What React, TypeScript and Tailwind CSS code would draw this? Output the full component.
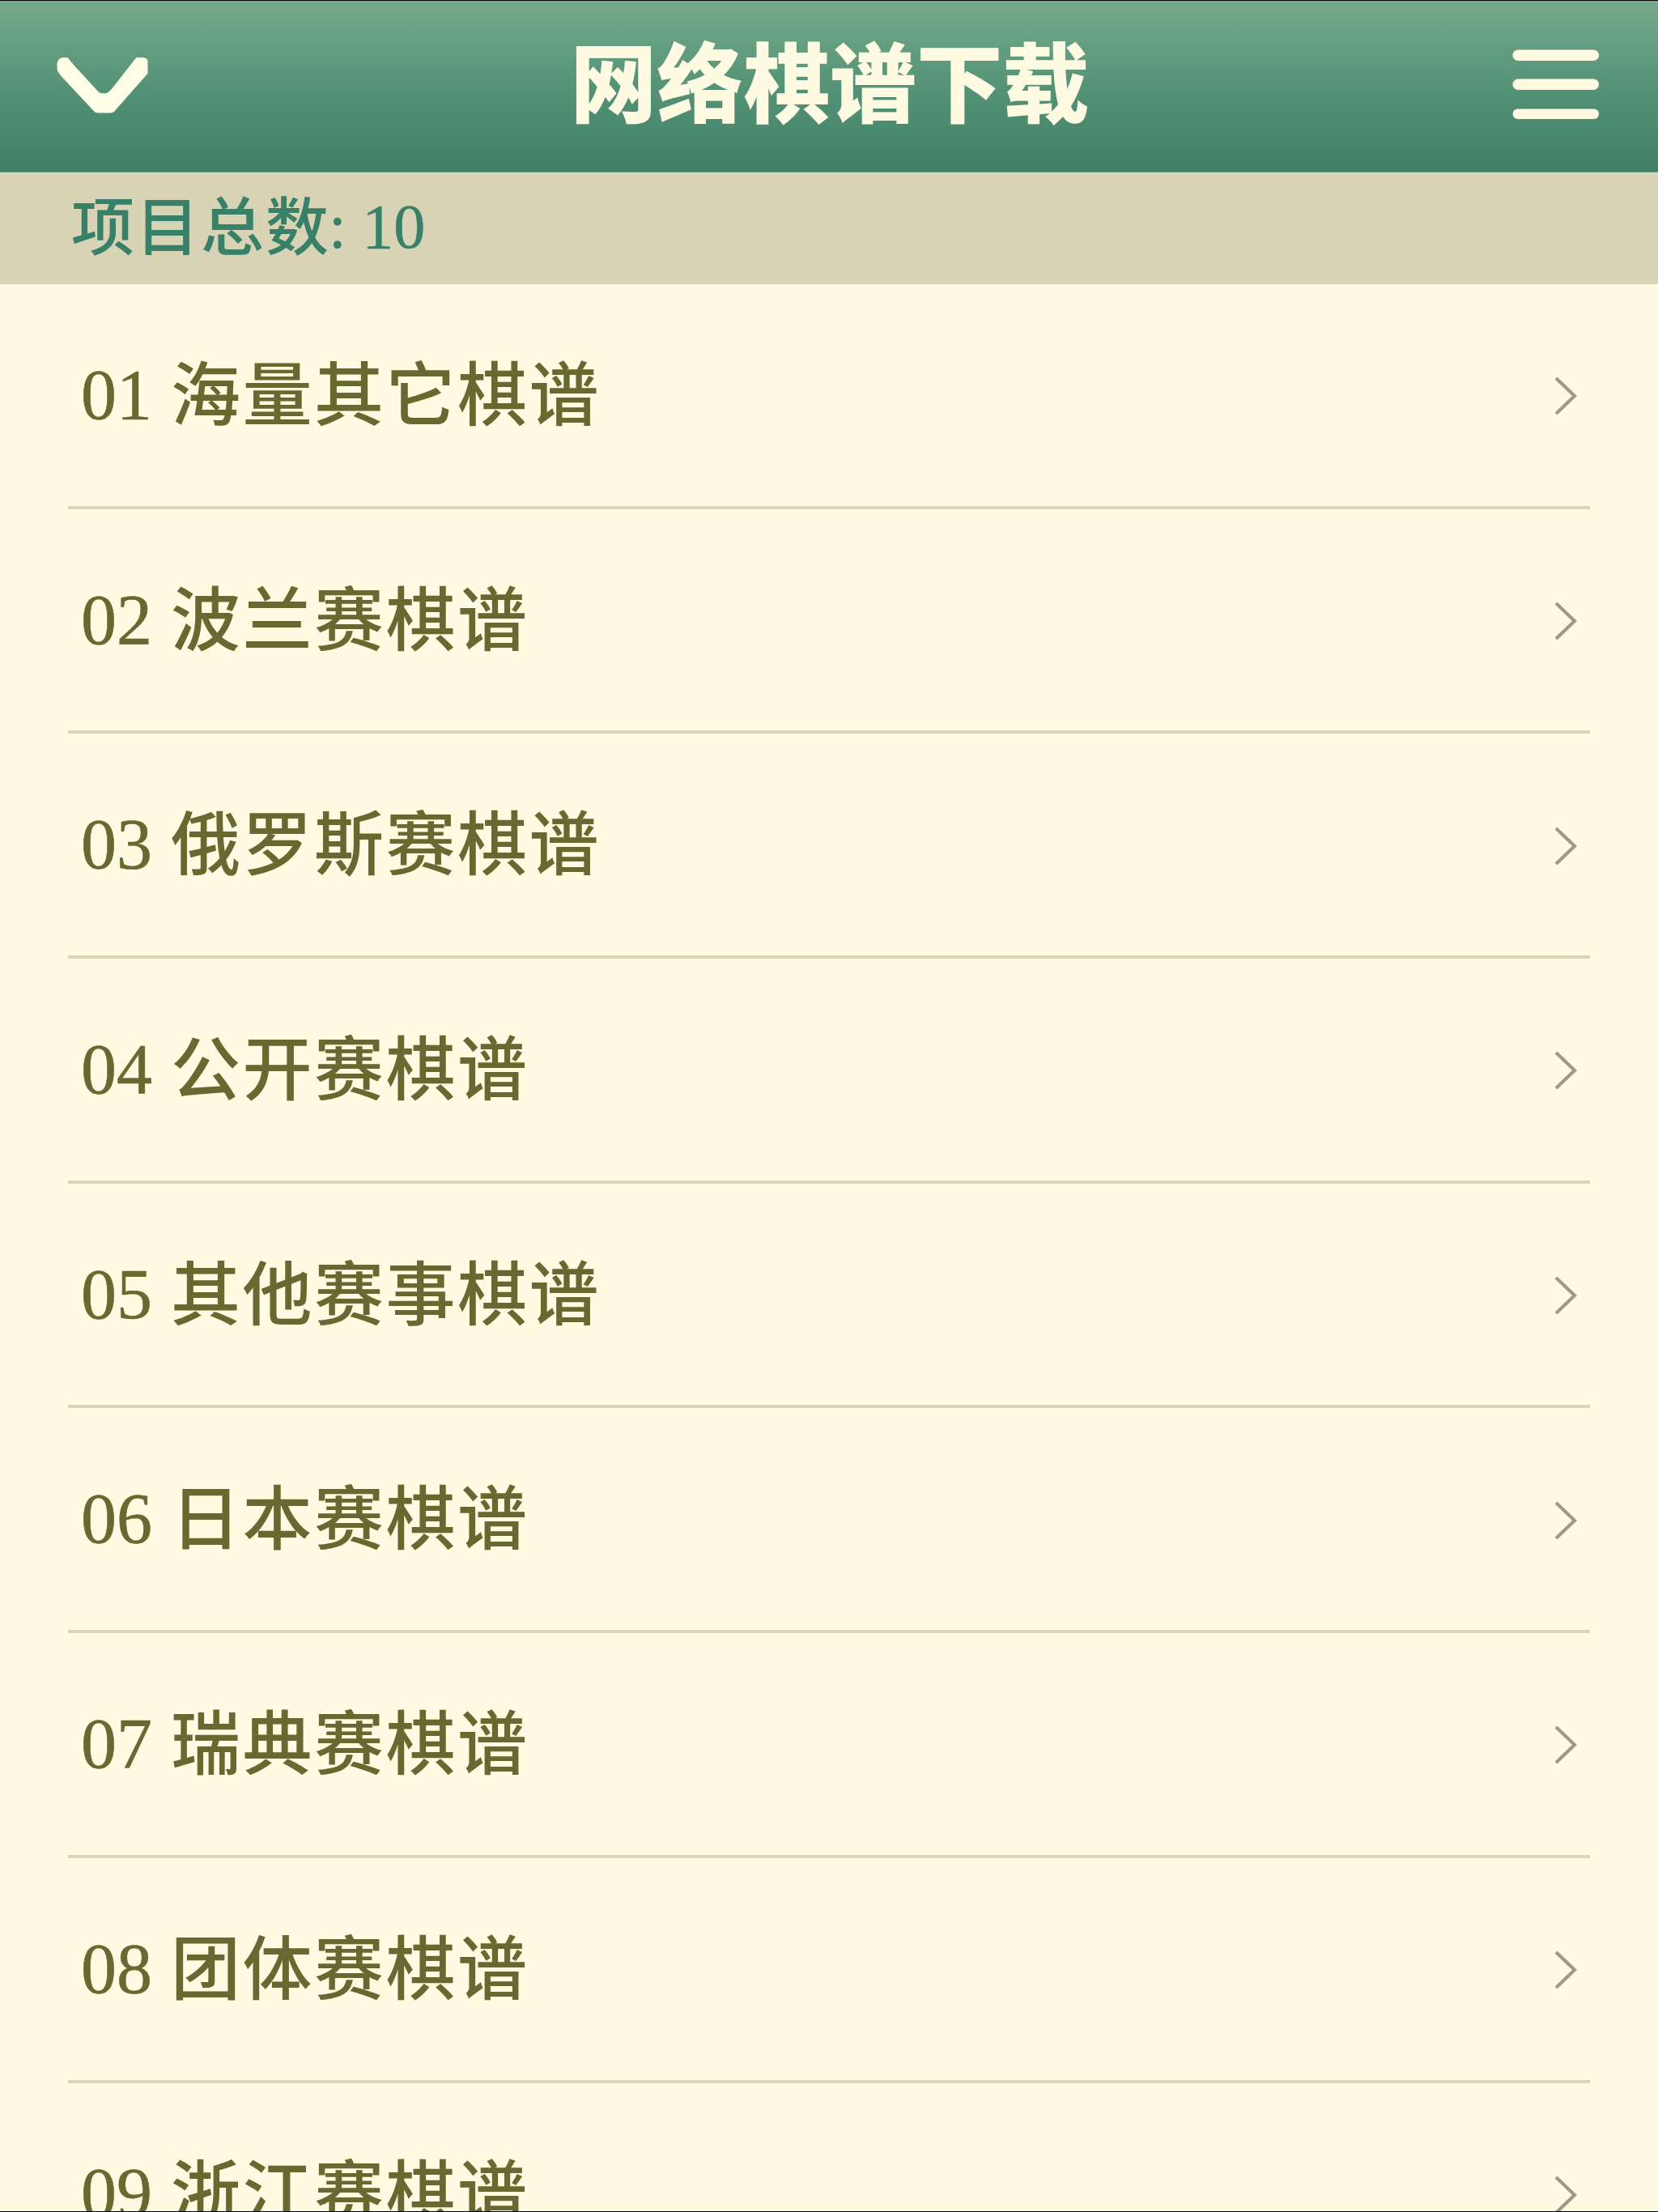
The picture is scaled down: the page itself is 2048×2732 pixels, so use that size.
const items = [
    '海量其它棋谱',
    '波兰赛棋谱',
    '俄罗斯赛棋谱',
    '公开赛棋谱',
    '其他赛事棋谱',
    '日本赛棋谱',
    '瑞典赛棋谱',
    '团体赛棋谱',
    '浙江赛棋谱',
];

const total = 10;

function BackIcon() {
    return (
        <svg className="h-[70px] w-[114px]" viewBox="70 70 114 70" fill="#fffde6">
            <path d="M70.5 79Q71.5 71 78.5 71H83.4L91.8 81L121.7 113.5Q123.5 115.3 126 115.3H130Q133 115.3 137.8 110L168.4 71H176.5Q182.5 71.5 182.5 76V90.7L143.5 135Q140.5 139.5 136 139.5H121.5Q117.5 139.5 114.8 136L76.5 95Q70.5 88 70.5 85Z" />
        </svg>
    );
}

function MenuIcon() {
    return (
        <svg className="h-[88px] w-[108px]" viewBox="0 0 108 88" fill="#fffae2">
            <rect x="0.5" y="0.5" width="106.5" height="13.5" rx="6.75" />
            <rect x="0.5" y="36.5" width="106.5" height="13.5" rx="6.75" />
            <rect x="0.5" y="73.5" width="106.5" height="12.5" rx="6.25" />
        </svg>
    );
}

interface RowProps {
    index: number;
    title: string;
}

function Row({ index, title }: RowProps) {
    return (
        <li className="flex h-[277.7px] shrink-0 items-center justify-between border-b-4 border-[#dad5b6] pr-4 pl-4 text-[#686831]">
            <span className="whitespace-pre text-[88px] leading-[100px] [-webkit-text-stroke:0.6px_#686831]">
                {String(index).padStart(2, '0') + ' '}
                <span className="pl-px align-[-2px] text-[86px] leading-none font-medium tracking-[2.5px] [-webkit-text-stroke:0]">{title}</span>
            </span>
            <svg className="mt-[3px] h-12 w-7" viewBox="0 0 28 48" fill="none" stroke="#9d9b84" strokeWidth="4.2">
                <path d="M2 2L25 24L2 46" />
            </svg>
        </li>
    );
}

function App() {
    return (
        <div className="flex h-[2732px] w-[2048px] flex-col overflow-hidden border-y border-black bg-[#fffae2] font-['Liberation_Serif','Noto_Sans_CJK_SC',serif]">
            <header className="flex h-[212px] shrink-0 items-center justify-between border-b border-[#66a081] bg-linear-to-b from-[#75ab8b] via-[#559377] to-[#3e8067] pr-[72px] pb-[3px] pl-[70px]">
                <BackIcon />
                <h1 className="pt-[3px] pr-0.5 text-[106.8px] leading-[120px] font-black text-[#fffae2]">网络棋谱下载</h1>
                <MenuIcon />
            </header>
            <div className="flex h-[138px] shrink-0 items-center bg-[#d8d3b5] pl-[88px] text-[78px] leading-[100px] whitespace-pre text-[#388068]">
                <span className="pt-px font-medium tracking-[2px]">项目总数</span>
                <span className="-ml-0.5 pb-[5px] [-webkit-text-stroke:0.6px_#388068]">: {total}</span>
            </div>
            <ul className="flex min-h-0 flex-1 flex-col overflow-hidden px-[84px]">
                {items.map((title, i) => (
                    <Row key={title} index={i + 1} title={title} />
                ))}
            </ul>
        </div>
    );
}

export default App;
